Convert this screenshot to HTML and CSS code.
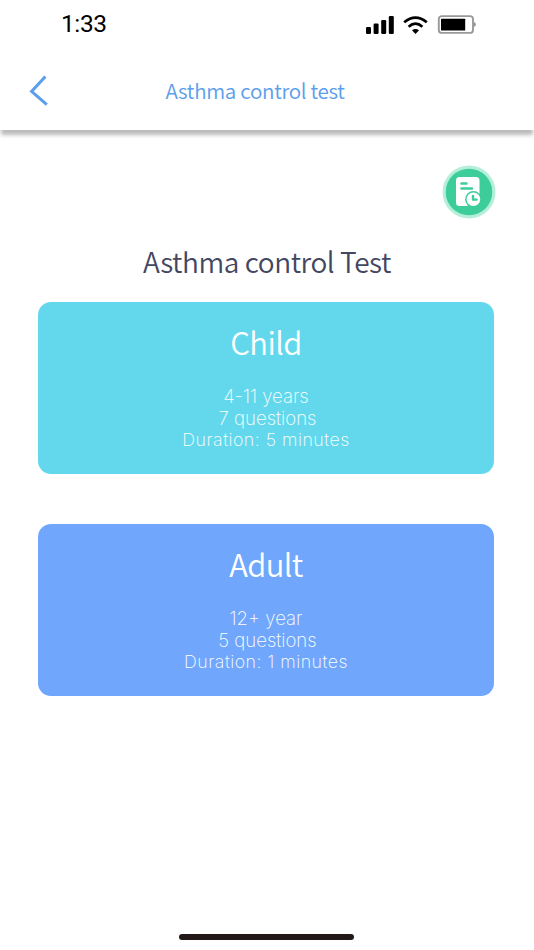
FILE: index.html
```html
<!DOCTYPE html>
<html lang="en">
<head>
    <meta charset="UTF-8">
    <title>Asthma control test</title>
    <link rel="stylesheet" href="styles.css">
</head>
<body>
<div class="screen">
    <header class="header">
        <div class="status">
            <span class="time">1:33</span>
            <svg class="status-icons" width="112" height="24" viewBox="0 0 112 24">
                <!-- signal -->
                <rect x="2" y="15" width="5" height="7" rx="1.2"/>
                <rect x="9.6" y="11.5" width="5" height="10.5" rx="1.2"/>
                <rect x="17.2" y="8" width="5" height="14" rx="1.2"/>
                <rect x="24.8" y="4" width="5" height="18" rx="1.2"/>
                <!-- wifi -->
                <g fill="none" stroke="#000" stroke-width="2.7">
                    <path d="M40.2 10.3Q51.5 0.9 62.8 10.3"/>
                    <path d="M44.6 14.7Q51.5 8.7 58.4 14.7"/>
                </g>
                <path d="M48 18.3Q51.5 15.7 55 18.3L51.5 22z"/>
                <!-- battery -->
                <rect x="74.8" y="4.1" width="34.2" height="16.8" rx="3" fill="#fff" stroke="#999" stroke-width="1.9"/>
                <rect x="77" y="6.7" width="24.2" height="11.8" rx="0.6"/>
                <path d="M110 10q2 .6 2 2.4t-2 2.4z" fill="#999"/>
            </svg>
        </div>
        <nav class="nav">
            <a class="back" href="#">
                <svg width="20" height="32" viewBox="0 0 20 32"><path d="M16.4 1.5L2.6 16.4L17.8 29.6" fill="none" stroke="#5b9eec" stroke-width="3"/></svg>
            </a>
            <h1 class="nav-title">Asthma control test</h1>
        </nav>
    </header>

    <main class="content">
        <a class="history" href="#">
            <svg width="54" height="54" viewBox="0 0 54 54">
                <circle cx="27" cy="27" r="26.5" fill="#b5efda"/>
                <circle cx="27" cy="27" r="23.3" fill="#3dcd9b"/>
                <rect x="14" y="12" width="23.5" height="29" rx="3.5" fill="#fff"/>
                <path d="M19.5 18.4h5M19.5 23.6h10.5" stroke="#3dcd9b" stroke-width="2.5" stroke-linecap="round"/>
                <circle cx="31.4" cy="34.3" r="8.3" fill="#3dcd9b"/>
                <circle cx="31.4" cy="34.3" r="6.8" fill="#fff"/>
                <path d="M31 31v3.6h3.6" fill="none" stroke="#3dcd9b" stroke-width="2.4" stroke-linecap="round" stroke-linejoin="round"/>
            </svg>
        </a>
        <h2 class="title">Asthma control Test</h2>

        <a class="card child" href="#">
            <h3>Child</h3>
            <p class="age">4-11 years</p>
            <p class="count">7 questions</p>
            <p class="duration">Duration: 5 minutes</p>
        </a>
        <a class="card adult" href="#">
            <h3>Adult</h3>
            <p class="age">12+ year</p>
            <p class="count">5 questions</p>
            <p class="duration">Duration: 1 minutes</p>
        </a>
    </main>

    <footer class="footer">
        <div class="home-bar"></div>
    </footer>
</div>
</body>
</html>
```
FILE: styles.css
```css
* {
    margin: 0;
    padding: 0;
    box-sizing: border-box;
}

body {
    background: #fff;
    font-family: "Noto Sans CJK SC", "Noto Sans", sans-serif;
}

a {
    text-decoration: none;
}

svg {
    display: block;
}

h1, h2, h3 {
    font-weight: 350;
}

.screen {
    height: 950px;
    display: flex;
    flex-direction: column;
    overflow: hidden;
}

/* status bar and navigation */
.header {
    height: 130px;
    box-shadow: 0 6px 4px -1px rgba(0, 0, 0, .27);
}

.status {
    height: 48px;
    padding: 0 58px 0 61px;
    display: flex;
    align-items: center;
    justify-content: space-between;
}

.time {
    font-family: Roboto, sans-serif;
    font-size: 24.5px;
    line-height: 48px;
    letter-spacing: -0.4px;
    color: #000;
}

.nav {
    height: 86px;
    padding: 0 51px 0 29px;
    display: grid;
    grid-template-columns: 20px 1fr 22px;
    align-items: center;
}

.nav-title {
    margin-top: -3px;
    font-size: 20.6px;
    line-height: 32px;
    letter-spacing: -0.32px;
    text-align: center;
    color: #5b9eec;
}

.content {
    flex: 1;
    padding: 35px 40px 0 38px;
    display: flex;
    flex-direction: column;
}

.history {
    align-self: flex-end;
    margin-right: -2px;
}

.title {
    margin: 21px 0 20px;
    padding-left: 2px;
    font-size: 28px;
    line-height: 42px;
    letter-spacing: -0.45px;
    text-align: center;
    color: #43475f;
}

/* test cards */
.card {
    height: 172px;
    margin-bottom: 50px;
    padding-top: 16px;
    border-radius: 13px;
    color: #fff;
    text-align: center;
}

.child {
    background: #63d8ec;
}

.adult {
    background: #70a7fc;
}

.card h3 {
    height: 67px;
    font-size: 31px;
    line-height: 47px;
    letter-spacing: -0.6px;
}

.card p {
    font-family: "Inter", "Liberation Sans", sans-serif;
    font-weight: 200;
    font-size: 18.6px;
    line-height: 22px;
}

.card .count {
    padding-left: 3px;
}

.card .duration {
    font-size: 17.8px;
    letter-spacing: 0.5px;
}

/* home indicator */
.footer {
    padding: 0 2px 10px 0;
    display: flex;
    justify-content: center;
}

.home-bar {
    width: 175px;
    height: 6px;
    border-radius: 3px;
    background: #211817;
}
```
